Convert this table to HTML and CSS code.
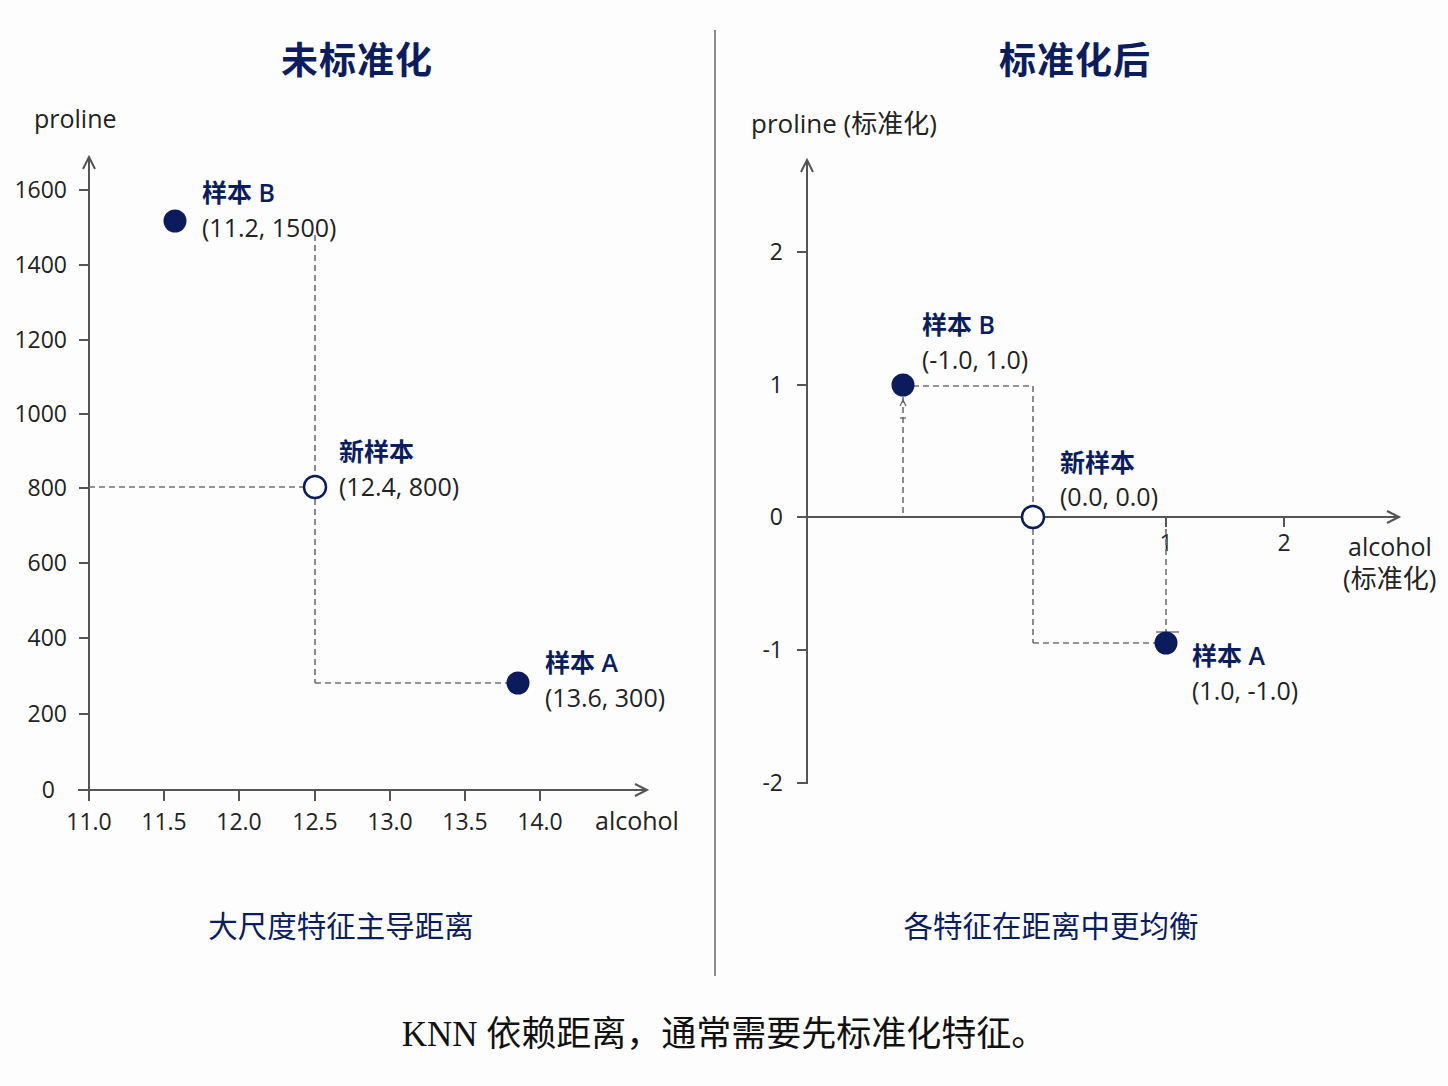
FILE: index.html
```html
<!DOCTYPE html>
<html lang="zh-CN">
<head>
<meta charset="utf-8">
<title>KNN 标准化对比</title>
<link rel="stylesheet" href="styles.css">
</head>
<body>
<main class="figure">
  <section class="panel panel-left">
    <h2 class="panel-title">未标准化</h2>
    <svg class="chart" width="714" height="794" viewBox="0 86 714 794" xmlns="http://www.w3.org/2000/svg">
      <text class="axis-name" x="34" y="128">proline</text>
      <g class="axis">
        <line x1="89" y1="791" x2="89" y2="157"/>
        <polyline class="arrow" points="83,169 89,157 95,169"/>
        <line x1="78" y1="790" x2="647" y2="790"/>
        <polyline class="arrow" points="635,784 647,790 635,796"/>
        <line x1="79" y1="190" x2="89" y2="190"/>
        <line x1="79" y1="265" x2="89" y2="265"/>
        <line x1="79" y1="340" x2="89" y2="340"/>
        <line x1="79" y1="414" x2="89" y2="414"/>
        <line x1="79" y1="488" x2="89" y2="488"/>
        <line x1="79" y1="563" x2="89" y2="563"/>
        <line x1="79" y1="638" x2="89" y2="638"/>
        <line x1="79" y1="714" x2="89" y2="714"/>
        <line x1="89" y1="790" x2="89" y2="801"/>
        <line x1="164" y1="790" x2="164" y2="801"/>
        <line x1="239" y1="790" x2="239" y2="801"/>
        <line x1="315" y1="790" x2="315" y2="801"/>
        <line x1="390" y1="790" x2="390" y2="801"/>
        <line x1="465" y1="790" x2="465" y2="801"/>
        <line x1="540" y1="790" x2="540" y2="801"/>
      </g>
      <g class="tick-y">
        <text x="67" y="198">1600</text>
        <text x="67" y="273">1400</text>
        <text x="67" y="348">1200</text>
        <text x="67" y="422">1000</text>
        <text x="67" y="496">800</text>
        <text x="67" y="571">600</text>
        <text x="67" y="646">400</text>
        <text x="67" y="722">200</text>
        <text x="55" y="798">0</text>
      </g>
      <g class="tick-x">
        <text x="89" y="830">11.0</text>
        <text x="164" y="830">11.5</text>
        <text x="239" y="830">12.0</text>
        <text x="315" y="830">12.5</text>
        <text x="390" y="830">13.0</text>
        <text x="465" y="830">13.5</text>
        <text x="540" y="830">14.0</text>
      </g>
      <text class="axis-name" x="595" y="830">alcohol</text>
      <g class="dash">
        <line x1="315" y1="235" x2="315" y2="476"/>
        <line x1="315" y1="499" x2="315" y2="683"/>
        <line x1="315" y1="683" x2="507" y2="683"/>
        <line x1="89" y1="487" x2="303" y2="487"/>
      </g>
      <circle class="dot" cx="175" cy="221" r="11.5"/>
      <circle class="dot-new" cx="315" cy="487" r="11"/>
      <circle class="dot" cx="518" cy="683" r="11.5"/>
      <text class="pt-name" x="202" y="202">样本 B</text>
      <text class="pt-coord" x="202" y="237">(11.2, 1500)</text>
      <text class="pt-name" x="339" y="461">新样本</text>
      <text class="pt-coord" x="339" y="496">(12.4, 800)</text>
      <text class="pt-name" x="545" y="672">样本 A</text>
      <text class="pt-coord" x="545" y="707">(13.6, 300)</text>
    </svg>
    <p class="caption caption-left">大尺度特征主导距离</p>
  </section>
  <div class="divider"></div>
  <section class="panel panel-right">
    <h2 class="panel-title">标准化后</h2>
    <svg class="chart" width="732" height="794" viewBox="716 86 732 794" xmlns="http://www.w3.org/2000/svg">
      <text class="axis-name axis-name-wide" x="751" y="133">proline (标准化)</text>
      <g class="axis">
        <line x1="807" y1="784" x2="807" y2="160"/>
        <polyline class="arrow" points="801,172 807,160 813,172"/>
        <line x1="797" y1="517" x2="1399" y2="517"/>
        <polyline class="arrow" points="1387,511 1399,517 1387,523"/>
        <line x1="797" y1="252" x2="807" y2="252"/>
        <line x1="797" y1="385" x2="807" y2="385"/>
        <line x1="797" y1="650" x2="807" y2="650"/>
        <line x1="797" y1="783" x2="807" y2="783"/>
        <line x1="1166" y1="517" x2="1166" y2="527"/>
        <line x1="1284" y1="517" x2="1284" y2="527"/>
      </g>
      <g class="tick-y">
        <text x="783" y="260">2</text>
        <text x="783" y="393">1</text>
        <text x="783" y="525">0</text>
        <text x="783" y="658">-1</text>
        <text x="783" y="791">-2</text>
      </g>
      <g class="tick-x">
        <text x="1166" y="551">1</text>
        <text x="1284" y="551">2</text>
      </g>
      <text class="axis-name" x="1348" y="556">alcohol</text>
      <text class="axis-name axis-name-wide" x="1343" y="588">(标准化)</text>
      <g class="dash">
        <line x1="913" y1="386" x2="1033" y2="386"/>
        <line x1="1033" y1="386" x2="1033" y2="505"/>
        <line x1="1033" y1="529" x2="1033" y2="643"/>
        <line x1="1033" y1="643" x2="1155" y2="643"/>
        <line x1="903" y1="397" x2="903" y2="517"/>
        <line x1="1166" y1="529" x2="1166" y2="632"/>
      </g>
      <g class="thin">
        <polyline points="900,406 903,400 906,406"/>
        <line x1="900" y1="418" x2="906" y2="418"/>
        <line x1="1156" y1="632" x2="1179" y2="632"/>
      </g>
      <circle class="dot" cx="903" cy="385" r="11.5"/>
      <circle class="dot-new" cx="1033" cy="517" r="11"/>
      <circle class="dot" cx="1166" cy="643" r="11.5"/>
      <text class="pt-name" x="922" y="334">样本 B</text>
      <text class="pt-coord" x="922" y="369">(-1.0, 1.0)</text>
      <text class="pt-name" x="1060" y="472">新样本</text>
      <text class="pt-coord" x="1060" y="506">(0.0, 0.0)</text>
      <text class="pt-name" x="1192" y="665">样本 A</text>
      <text class="pt-coord" x="1192" y="700">(1.0, -1.0)</text>
    </svg>
    <p class="caption caption-right">各特征在距离中更均衡</p>
  </section>
</main>
<p class="footer-note">KNN 依赖距离，通常需要先标准化特征。</p>
</body>
</html>
```
FILE: styles.css
```css
html, body {
  margin: 0;
  padding: 0;
  background: #fdfdfd;
}

body {
  width: 1448px;
  height: 1086px;
  overflow: hidden;
  font-family: "Open Sans", "Noto Sans CJK SC", sans-serif;
  color: #222;
}

.figure {
  display: flex;
  margin-top: 30px;
  height: 946px;
}

.panel {
  display: flex;
  flex-direction: column;
}

.panel-left {
  width: 714px;
}

.panel-right {
  width: 732px;
}

.divider {
  width: 2px;
  background: #8c8c8c;
}

.panel-title {
  margin: 0;
  height: 56px;
  line-height: 56px;
  font-family: "Noto Sans CJK SC", sans-serif;
  font-size: 37px;
  font-weight: 700;
  color: #0c1d5e;
  text-align: center;
  letter-spacing: 1px;
}

.panel-right .panel-title {
  padding-right: 14px;
}

.chart {
  display: block;
  overflow: visible;
}

.chart text {
  font-family: "Open Sans", "Noto Sans CJK SC", sans-serif;
  font-size: 23px;
  fill: #222;
}

.chart .axis-name {
  font-size: 25px;
}

.chart .axis-name-wide {
  font-size: 26px;
}

.axis line,
.axis polyline {
  stroke: #555;
  stroke-width: 2;
  fill: none;
}

.chart .tick-y text {
  text-anchor: end;
}

.chart .tick-x text {
  text-anchor: middle;
}

.dash line {
  stroke: #707070;
  stroke-width: 1.6;
  stroke-dasharray: 6 4;
}

.thin line,
.thin polyline {
  stroke: #666;
  stroke-width: 1.3;
  fill: none;
}

.dot {
  fill: #0b1b5b;
}

.dot-new {
  fill: #fff;
  stroke: #0b1b5b;
  stroke-width: 2.5;
}

.chart .pt-name {
  font-family: "Open Sans", "Noto Sans CJK SC", sans-serif;
  font-size: 25px;
  font-weight: 600;
  fill: #0c1d5e;
}

.chart .pt-coord {
  font-size: 25px;
  fill: #222;
}

.caption {
  margin: 24px 0 0;
  line-height: 40px;
  font-family: "Noto Sans CJK SC", sans-serif;
  font-size: 29.5px;
  color: #0c1d5e;
  text-align: center;
}

.caption-left {
  padding-right: 32px;
}

.caption-right {
  padding-right: 62px;
}

.footer-note {
  margin: 34px 0 0;
  line-height: 50px;
  font-family: "Liberation Serif", "Noto Sans CJK SC", serif;
  font-size: 35px;
  color: #111;
  text-align: center;
}
```
